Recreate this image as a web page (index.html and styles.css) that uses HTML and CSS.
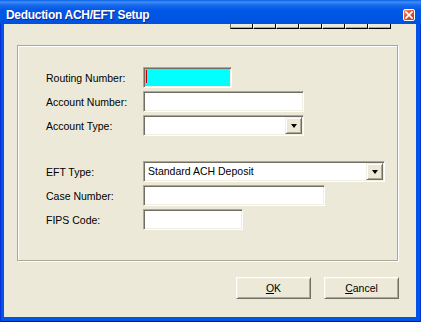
FILE: index.html
```html
<!DOCTYPE html>
<html lang="en">
<head>
    <meta charset="UTF-8">
    <title>Deduction ACH/EFT Setup</title>
    <link rel="stylesheet" href="styles.css">
</head>
<body>
    <div class="window">
        <div class="titlebar">
            <span class="title">Deduction ACH/EFT Setup</span>
            <span class="close">
                <svg width="10" height="10" viewBox="0 0 10 10">
                    <path d="M2 2 L8 8 M8 2 L2 8" stroke="#fff" stroke-width="1.7" stroke-linecap="square"/>
                </svg>
            </span>
        </div>

        <div class="client">
            <div class="tabstrip">
                <span></span><span></span><span></span><span></span><span></span><span></span><span></span>
            </div>

            <div class="group">
                <div class="row">
                    <label>Routing Number:</label>
                    <div class="textbox w-routing focused"><span class="caret"></span></div>
                </div>
                <div class="row">
                    <label>Account Number:</label>
                    <div class="textbox w-account"></div>
                </div>
                <div class="row">
                    <label>Account Type:</label>
                    <div class="textbox combo w-account">
                        <span class="combo-text"></span>
                        <span class="drop"><span class="arrow"></span></span>
                    </div>
                </div>

                <div class="row section">
                    <label>EFT Type:</label>
                    <div class="textbox combo w-eft">
                        <span class="combo-text">Standard ACH Deposit</span>
                        <span class="drop"><span class="arrow"></span></span>
                    </div>
                </div>
                <div class="row">
                    <label>Case Number:</label>
                    <div class="textbox w-case"></div>
                </div>
                <div class="row">
                    <label>FIPS Code:</label>
                    <div class="textbox w-fips"></div>
                </div>
            </div>

            <div class="buttons">
                <button><u>O</u>K</button>
                <button><u>C</u>ancel</button>
            </div>
        </div>
    </div>
</body>
</html>
```

FILE: styles.css
```css
body {
    margin: 0;
    font-family: "Liberation Sans", Arial, sans-serif;
    background-color: #0054e3;
}
.window {
    width: 421px;
    height: 322px;
    display: flex;
    flex-direction: column;
    background-color: #0055e5;
    box-shadow: inset 1px 0 #0831d9, inset -1px 0 #0831d9, inset 0 -1px #00138c;
}
.titlebar {
    height: 24px;
    box-sizing: border-box;
    padding: 6px 0 0 6px;
    display: flex;
    align-items: flex-start;
    background: linear-gradient(to bottom, #0a5fe8 0, #3d8ff5 2px, #1a6aee 5px, #0058e6 10px, #0055e4 18px, #0050dc 24px);
}
.title {
    color: #fff;
    font-weight: bold;
    font-size: 12px;
    line-height: 18px;
    letter-spacing: -0.3px;
    text-shadow: 1px 1px 0 #0a2a9a;
}
.close {
    margin: 3px 6px 0 auto;
    width: 12px;
    height: 12px;
    box-sizing: border-box;
    border: 1px solid #fff;
    border-radius: 2px;
    background: linear-gradient(135deg, #f0906e 0, #dc5631 45%, #c23b16 100%);
    display: flex;
    align-items: center;
    justify-content: center;
}
.close svg {
    display: block;
}
.client {
    flex: 1;
    margin: 0 5px 5px 4px;
    background-color: #ece9d8;
}
.tabstrip {
    display: flex;
    height: 5px;
    margin-left: 226px;
}
.tabstrip span {
    width: 23px;
    box-sizing: border-box;
    border-right: 1px solid #000;
    border-bottom: 1px solid #000;
    border-left: 1px solid #fff;
    box-shadow: inset 0 -1px #aca899;
}
.tabstrip span:first-child {
    border-left-color: #716f64;
}
.group {
    margin: 16px 0 0 13px;
    width: 381px;
    height: 216px;
    box-sizing: border-box;
    padding: 21px 0 0 28px;
    border: 1px solid #aca899;
    box-shadow: 1px 1px 0 #fff, inset 1px 1px 0 #fff;
}
.row {
    display: flex;
    align-items: center;
    height: 21px;
    margin-bottom: 3px;
}
.row.section {
    margin-top: 25px;
}
label {
    width: 97px;
    font-size: 10.5px;
    color: #000;
}
.textbox {
    height: 21px;
    box-sizing: border-box;
    background-color: #fff;
    border: 1px solid;
    border-color: #aca899 #fff #fff #aca899;
    box-shadow: inset 1px 1px 0 #716f64, inset -1px -1px 0 #f1efe2;
    padding: 1px;
    display: flex;
    align-items: stretch;
}
.textbox.focused {
    background-color: #00ffff;
}
.caret {
    width: 1px;
    height: 13px;
    margin: 1px 0 0 1px;
    background-color: #c00000;
}
.w-routing { width: 89px; }
.w-account { width: 161px; }
.w-eft { width: 242px; }
.w-case { width: 182px; }
.w-fips { width: 100px; }
.combo-text {
    flex: 1;
    padding-left: 3px;
    font-size: 10.5px;
    line-height: 17px;
}
.drop {
    width: 17px;
    height: 17px;
    box-sizing: border-box;
    background-color: #ece9d8;
    border: 1px solid;
    border-color: #f1efe2 #716f64 #716f64 #f1efe2;
    box-shadow: inset 1px 1px 0 #fff, inset -1px -1px 0 #aca899;
    display: flex;
    align-items: center;
    justify-content: center;
}
.arrow {
    width: 0;
    height: 0;
    border-left: 3.5px solid transparent;
    border-right: 3.5px solid transparent;
    border-top: 4px solid #000;
}
.buttons {
    display: flex;
    gap: 13px;
    margin-top: 16px;
    padding-left: 232px;
}
button {
    width: 75px;
    height: 22px;
    box-sizing: border-box;
    padding: 0;
    font-family: "Liberation Sans", Arial, sans-serif;
    font-size: 10.5px;
    color: #000;
    background-color: #ece9d8;
    border: 1px solid;
    border-color: #fff #716f64 #716f64 #fff;
    box-shadow: inset 1px 1px 0 #f1efe2, inset -1px -1px 0 #aca899;
}
```
